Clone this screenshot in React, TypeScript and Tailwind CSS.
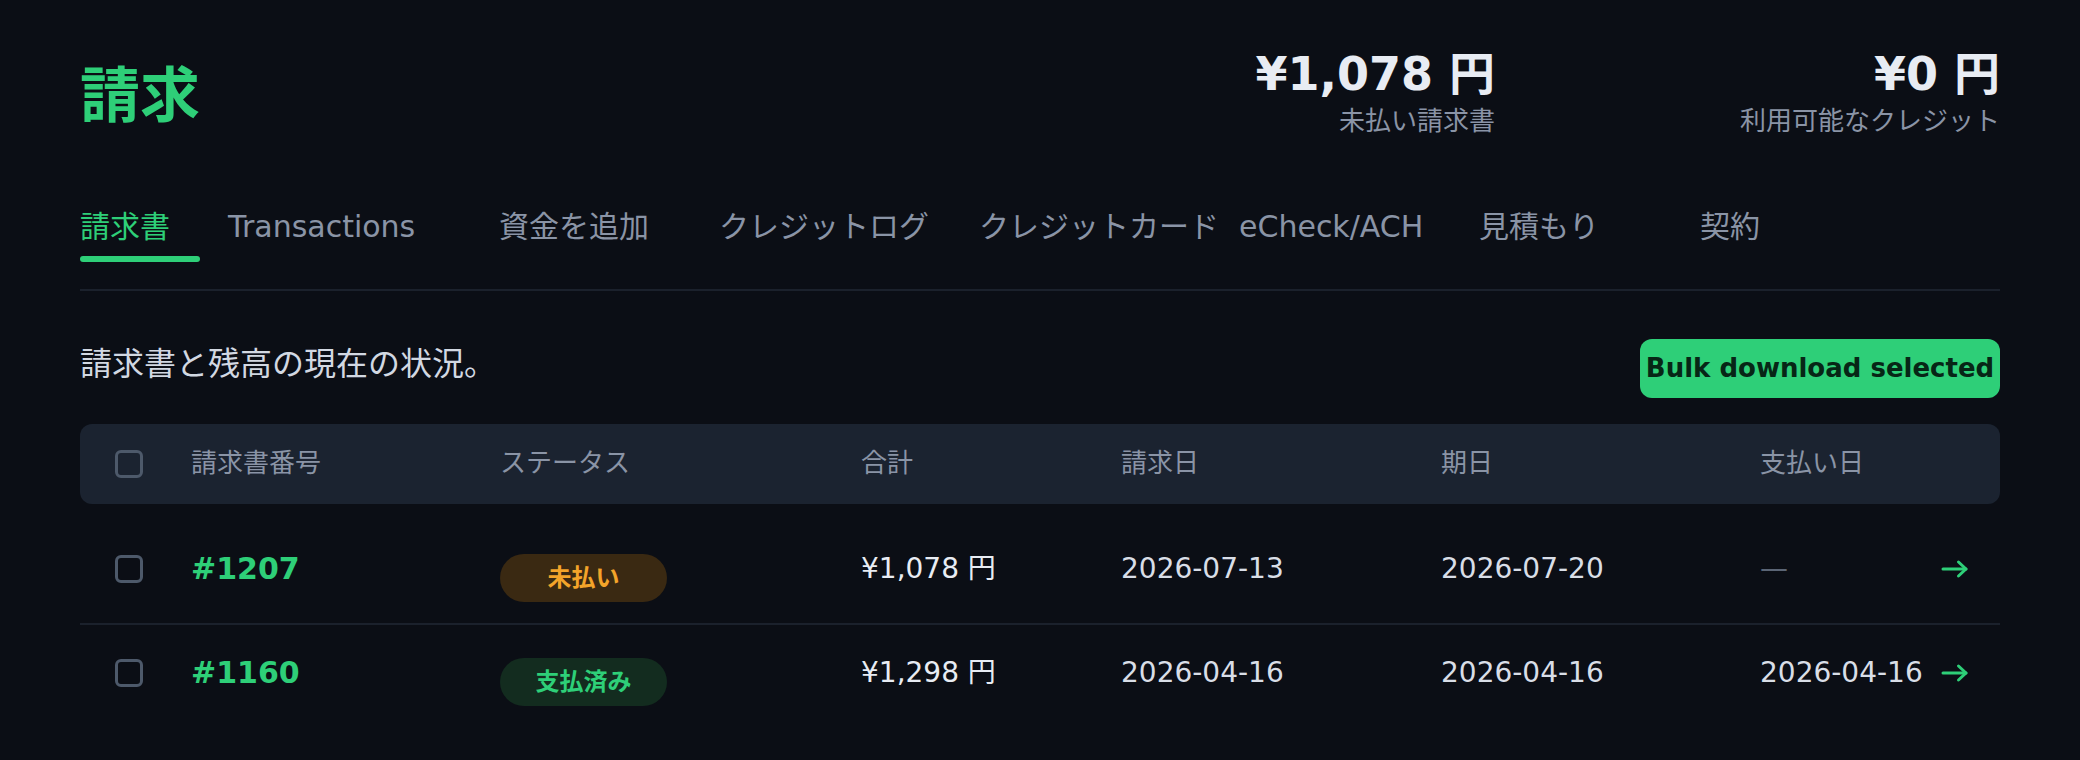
import { useState } from "react";

const tabs = [
  { label: "請求書", w: "w-[120px]", active: true },
  { label: "Transactions", w: "w-[243px]" },
  { label: "資金を追加", w: "w-[192px]" },
  { label: "クレジットログ", w: "w-[232px]" },
  { label: "クレジットカード", w: "w-[232px]" },
  { label: "eCheck/ACH", w: "w-[212px]" },
  { label: "見積もり", w: "w-[193px]" },
  { label: "契約", w: "w-[120px]" },
];

const invoices = [
  { id: "#1207", status: "unpaid", total: "¥1,078 円", issued: "2026-07-13", due: "2026-07-20", paid: null, row: "h-[110px] border-b-2 border-[#1b212c]" },
  { id: "#1160", status: "paid", total: "¥1,298 円", issued: "2026-04-16", due: "2026-04-16", paid: "2026-04-16", row: "h-[96px]" },
];

function Checkbox() {
  return <span className="block w-[28px] h-[28px] rounded-[6px] border-[3px] border-[#4d596a]" />;
}

function Arrow() {
  return (
    <svg width="28" height="22" viewBox="0 0 28 22" fill="none" stroke="#2ecf78" strokeWidth="3" strokeLinecap="round" strokeLinejoin="round">
      <path d="M2 11h23" />
      <path d="M17.5 4l7.5 7-7.5 7" />
    </svg>
  );
}

function StatusBadge({ status }: { status: string }) {
  if (status === "paid") {
    return (
      <span className="mt-[18px] inline-flex items-center justify-center w-[167px] h-[48px] rounded-full bg-[#132c1f] text-[#2ecf78] text-[24px] font-bold">
        支払済み
      </span>
    );
  }
  return (
    <span className="mt-[18px] inline-flex items-center justify-center w-[167px] h-[48px] rounded-full bg-[#3a2912] text-[#f3a42a] text-[24px] font-bold">
      未払い
    </span>
  );
}

export default function App() {
  const [activeTab] = useState(0);

  return (
    <div className="min-h-screen w-full bg-[#0b0e15] px-[80px] pt-[48px] font-['DejaVu_Sans','Noto_Sans_CJK_JP',sans-serif]">
      {/* header: title + balances */}
      <div className="flex items-center justify-between">
        <h1 className="mt-[6px] text-[60px] leading-none font-bold text-[#2ecf78]">請求</h1>
        <div className="flex items-start gap-[245px]">
          <div className="flex flex-col items-end">
            <span className="text-[46px] leading-[1.15] font-bold text-[#e8ecf3]">¥1,078 円</span>
            <span className="mt-[4px] text-[26px] leading-[1.3] text-[#8a94a6]">未払い請求書</span>
          </div>
          <div className="flex flex-col items-end">
            <span className="text-[46px] leading-[1.15] font-bold text-[#e8ecf3]">¥0 円</span>
            <span className="mt-[4px] text-[26px] leading-[1.3] text-[#8a94a6]">利用可能なクレジット</span>
          </div>
        </div>
      </div>

      {/* tabs */}
      <nav className="mt-[67px] flex gap-[28px] border-b-2 border-[#1b212c] pb-[27px]">
        {tabs.map((t, i) => (
          <div key={t.label} className={`${t.w} flex flex-col`}>
            <span
              className={`text-[30px] leading-[1.4] whitespace-nowrap ${
                i === activeTab ? "text-[#2ecf78]" : "text-[#8a94a6]"
              }`}
            >
              {t.label}
            </span>
            {i === activeTab ? (
              <span className="mt-[8px] h-[6px] w-full rounded-full bg-[#2ecf78]" />
            ) : (
              <span className="mt-[8px] h-[6px]" />
            )}
          </div>
        ))}
      </nav>

      {/* description + bulk action */}
      <div className="mt-[44px] flex items-start justify-between">
        <p className="mt-[5px] text-[32px] leading-[48px] text-[#d2d8e2]">請求書と残高の現在の状況。</p>
        <button className="mt-[4px] h-[59px] w-[360px] rounded-[12px] bg-[#2ecf78] text-[26px] font-bold text-[#072616] whitespace-nowrap">
          Bulk download selected
        </button>
      </div>

      {/* table */}
      <div className="mt-[26px]">
        <div className="grid h-[80px] grid-cols-[111px_309px_361px_260px_320px_319px_1fr] items-center rounded-[12px] bg-[#1b2330] text-[26px] text-[#8a94a6]">
          <div className="pl-[35px]">
            <Checkbox />
          </div>
          <span>請求書番号</span>
          <span>ステータス</span>
          <span>合計</span>
          <span>請求日</span>
          <span>期日</span>
          <span>支払い日</span>
        </div>

        <div className="mt-[11px]">
          {invoices.map((inv) => (
            <div
              key={inv.id}
              className={`grid ${inv.row} grid-cols-[111px_309px_361px_260px_320px_319px_1fr] items-center text-[28px] text-[#d9dee7]`}
            >
              <div className="pl-[35px]">
                <Checkbox />
              </div>
              <span className="text-[30px] font-bold text-[#2ecf78]">{inv.id}</span>
              <div className="flex items-center">
                <StatusBadge status={inv.status} />
              </div>
              <span className="text-[#e8ecf3]">{inv.total}</span>
              <span>{inv.issued}</span>
              <span>{inv.due}</span>
              <div className="flex items-center justify-between pr-[31px]">
                {inv.paid ? <span>{inv.paid}</span> : <span className="text-[#5b6575]">—</span>}
                <Arrow />
              </div>
            </div>
          ))}
        </div>
      </div>
    </div>
  );
}
